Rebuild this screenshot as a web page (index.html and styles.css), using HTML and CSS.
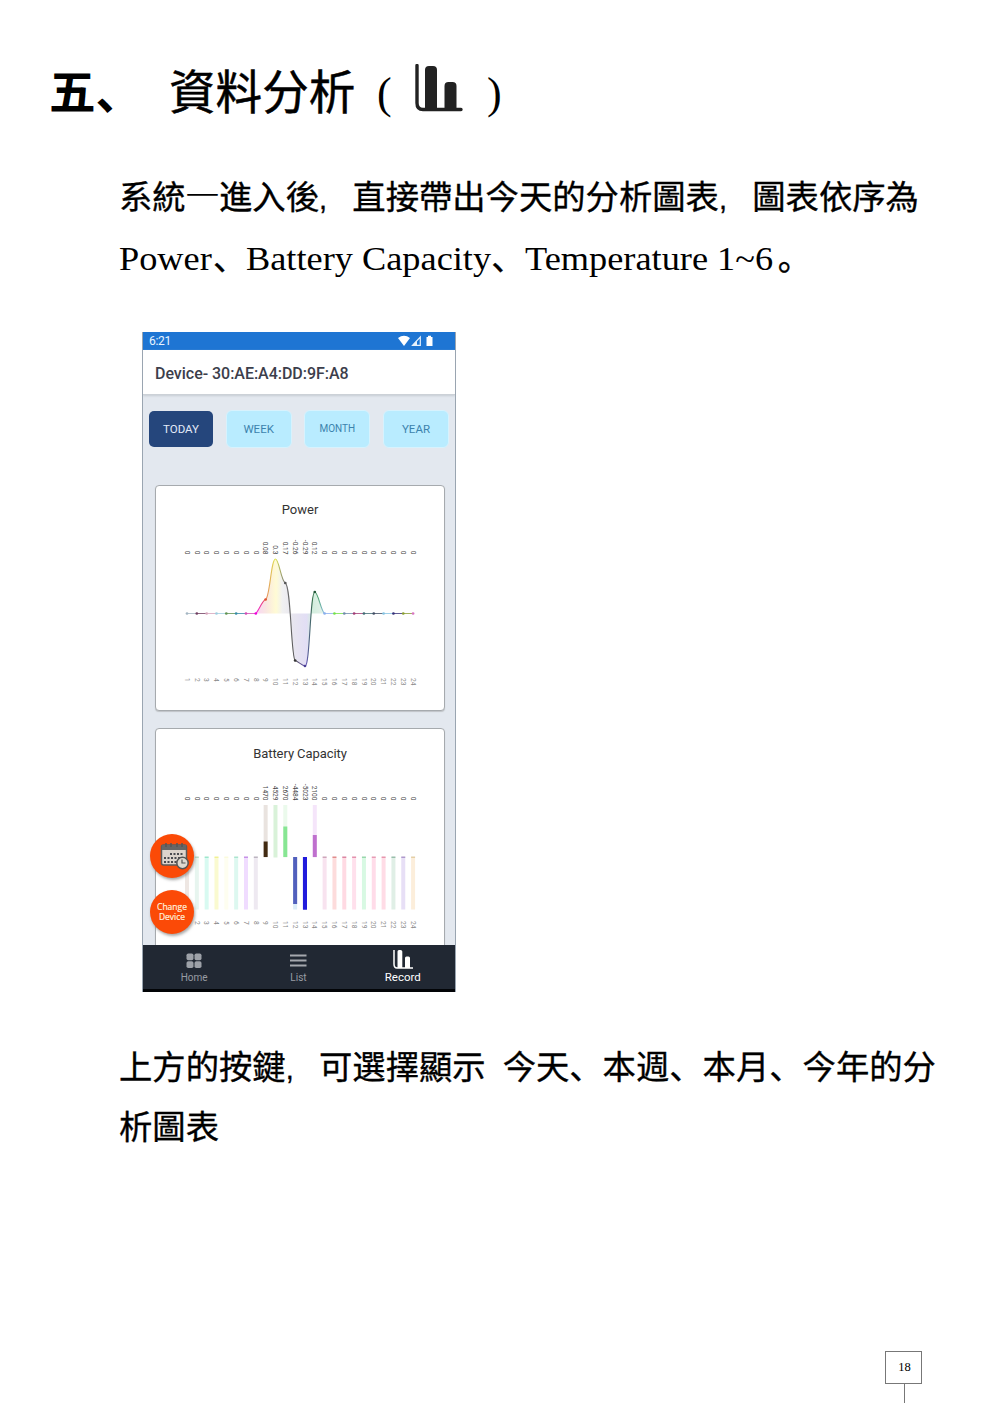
FILE: index.html
```html
<!DOCTYPE html>
<html lang="zh-Hans">
<head>
<meta charset="utf-8">
<title>資料分析</title>
<link rel="stylesheet" href="styles.css">
</head>
<body>
<main class="page">
  <h1 class="heading">
    <span class="heading-number">五、</span>
    <span class="heading-title">資料分析</span>
    <span class="paren">(</span>
    <svg class="heading-icon" viewBox="0 0 48 48"><path d="M2 1.500V39Q2 45.500 8 45.500H46" fill="none" stroke="#222" stroke-width="3.400" stroke-linecap="round"/><path d="M10 45V6Q10 2 14 2H18Q22 2 22 6V45ZM29.500 45V22Q29.500 18 33.500 18H37.500Q41.500 18 41.500 22V45Z" fill="#222"/></svg>
    <span class="paren">)</span>
  </h1>
  <p class="body-text intro">系統<span class="one">一</span>進入後<span class="comma">,</span>直接帶出今天的分析圖表<span class="comma">,</span>圖表依序為<br><span class="latin power">Power</span>、<span class="latin battery">Battery Capacity</span>、<span class="latin temperature">Temperature 1~6</span>。</p>

  <section class="phone">
    <div class="status">
      <span>6:21</span>
      <svg class="status-icons" viewBox="0 0 36 12"><path d="M0 3Q6-1.500 12 3L6 11ZM28.500 2H30V.8H33V2H34.500V11H28.500Z" fill="#fff"/><path d="M14.500 10.300L22.300 2V10.300Z" fill="none" stroke="#e7f1fb" stroke-width="1.200"/><path d="M14 10.800L19 5.500V10.800Z" fill="#e7f1fb"/></svg>
    </div>
    <header class="device">Device- 30:AE:A4:DD:9F:A8</header>
    <div class="content">
      <nav class="periods"><span class="period active">TODAY</span><span class="period">WEEK</span><span class="period small">MONTH</span><span class="period">YEAR</span></nav>
      <article class="card">
        <h2>Power</h2>
        <svg class="chart" id="power-chart" viewBox="156 527 288 184"></svg>
      </article>
      <article class="card">
        <h2>Battery Capacity</h2>
        <svg class="chart" id="battery-chart" viewBox="156 770 288 184"></svg>
      </article>
    </div>
    <nav class="tabs">
      <div class="tab"><svg viewBox="0 0 20 20"><g fill="#9da1a8"><rect x="2.500" y="2.500" width="7" height="6.800" rx="1.800"/><rect x="10.500" y="2.500" width="7" height="6.800" rx="1.800"/><rect x="2.500" y="10.300" width="7" height="6.800" rx="1.800"/><rect x="10.500" y="10.300" width="7" height="6.800" rx="1.800"/></g></svg>Home</div>
      <div class="tab"><svg viewBox="0 0 20 20"><path d="M2 4.500H18.500M2 9.500H18.500M2 14.500H18.500" stroke="#a5a8ae" stroke-width="2"/></svg>List</div>
      <div class="tab selected"><svg viewBox="0 0 20 20"><path d="M1 0V14Q1 18 4 18H20" fill="none" stroke="#fff" stroke-width="1.500"/><path d="M4.500 18V1.500Q4.500 0 6 0H7.500Q9.300 0 9.300 1.500V18ZM12 18V8Q12 6.500 13.500 6.500H15.500Q17 6.500 17 8V18Z" fill="#fff"/></svg>Record</div>
    </nav>
    <div class="floating">
      <div class="round"><svg viewBox="0 0 30 30"><rect x="2.500" y="4" width="25" height="20" rx="2" fill="#ddd4cc" stroke="#5b5b5b" stroke-width="1.500"/><path d="M3 4H27V9H3Z" fill="#666"/><path d="M7 2V6M12 2V6M18 2V6M23 2V6" stroke="#555" stroke-width="1.500"/><path d="M11 13H25M5 17H25M5 21H19" stroke="#4b4b50" stroke-width="2" stroke-dasharray="2 1.500"/><circle cx="23.500" cy="22" r="5.700" fill="#ddd8cf" stroke="#555" stroke-width="1.500"/><path d="M23 18.500V22H26.500" fill="none" stroke="#555" stroke-width="1.200"/></svg></div>
      <div class="round"><span>Change</span><span>Device</span></div>
    </div>
  </section>

  <p class="body-text outro">上方的按鍵<span class="comma">,</span>可選擇顯示<span class="gap"></span>今天、本週、本月、今年的分<br>析圖表</p>
  <footer class="folio"><span class="folio-number">18</span><span class="folio-line"></span></footer>
</main>
<script src="charts.js"></script>
</body>
</html>
```
FILE: styles.css
```css
* { box-sizing: border-box; }
body { margin: 0; background: #fff; color: #000; }
.page { width: 992px; height: 1403px; padding-top: 54px; display: flex; flex-direction: column; overflow: hidden; }
.heading { margin: 0; height: 76px; padding-left: 49px; display: flex; align-items: center; font: 400 46.6px/76px "Noto Sans CJK SC", sans-serif; white-space: nowrap; }
.heading-number { width: 120px; margin-top: -6px; font-weight: 700; }
.heading-title { width: 208px; margin-top: -6px; -webkit-text-stroke: .5px #000; }
.paren { width: 16px; font: 44px/76px "Liberation Serif", serif; padding-top: 3px; }
.heading-icon { width: 48px; height: 48px; margin: -8px 24px 0 22px; }
.body-text { margin: 0; padding-left: 119px; font: 400 33.35px/61px "Noto Sans CJK SC", sans-serif; white-space: nowrap; -webkit-text-stroke: .35px #000; }
.intro { padding-top: 34px; height: 202px; }
.comma { display: inline-block; width: 33.35px; font-family: "Liberation Sans", sans-serif; font-size: 29px; line-height: 1; }
.one { display: inline-block; line-height: 1; transform: scaleY(.6); -webkit-text-stroke: 0; }
.latin { display: inline-block; line-height: 1; font-family: "Liberation Serif", serif; transform: scaleX(1.09); transform-origin: left; -webkit-text-stroke: 0; }
.power { width: 94px; }
.battery { width: 245px; }
.temperature { width: 253px; }
.phone { position: relative; margin-left: 142px; width: 314px; height: 660px; display: flex; flex-direction: column; overflow: hidden; border: 1px solid #9aa5b1; border-top: 0; border-bottom: 0; background: #e3e8ef; font-family: Roboto, sans-serif; }
.status { height: 18px; flex: none; padding: 0 21px 0 6px; display: flex; justify-content: space-between; align-items: center; background: #1e75d3; color: #e9f4ff; font-size: 12px; letter-spacing: -.3px; }
.status-icons { width: 36px; height: 12px; }
.device { height: 45px; flex: none; padding-left: 12px; background: #fff; color: #3c3e4b; font-size: 16px; font-weight: 500; line-height: 47px; letter-spacing: -.03px; border-bottom: 1px solid #ccd1d7; box-shadow: 0 1px 2px #c6ccd3; }
.content { height: 550px; flex: none; padding: 15px 6px 0 6px; overflow: hidden; }
.periods { height: 38px; display: flex; justify-content: space-between; align-items: center; }
.period { width: 66px; height: 38px; border: 1.5px solid #d7f2fd; border-radius: 6px; background: #b9ecff; color: #3c83ad; font-size: 11.5px; line-height: 36px; text-align: center; }
.period.active { width: 64px; height: 36px; border: 0; border-radius: 5px; background: #25467c; color: #e3eaf8; }
.period.small { font-size: 10px; }
.card { width: 290px; height: 226px; margin: 0 0 17px 6px; border: 1px solid #a6aaae; border-radius: 4px; background: #fff; box-shadow: 0 1px 1px #bfc3c7; }
.periods + .card { margin-top: 37px; }
.card h2 { margin: 0; height: 41px; padding-top: 15px; color: #333; font: 400 13px/18px Roboto, sans-serif; text-align: center; }
.card:last-child h2 { padding-top: 16px; letter-spacing: -.08px; }
.chart { display: block; width: 288px; height: 184px; }
.chart text { font: 6.6px Roboto, sans-serif; }
.tabs { height: 47px; flex: none; display: grid; grid-template-columns: repeat(3, 104.3px); margin-left: -1px; background: #212833; border-bottom: 3px solid #020407; }
.tab { display: flex; flex-direction: column; align-items: center; padding-top: 6px; color: #989ca4; font-size: 10px; line-height: 14px; }
.tab svg { width: 20px; height: 20px; }
.tab.selected { color: #fff; font-size: 11.5px; padding-top: 5px; }
.floating { position: absolute; left: 7px; top: 502px; display: grid; gap: 12px; }
.round { width: 44px; height: 44px; display: grid; justify-items: center; align-content: center; border-radius: 50%; background: #fb4a07; box-shadow: 1px 2px 3px #6c6c6c99; color: #fff1df; font: 8.5px/10px "Open Sans", sans-serif; -webkit-text-stroke: .2px #fff1df; }
.round span { height: 10px; overflow: hidden; }
.round svg { width: 30px; height: 30px; margin-left: 3px; }
.outro { padding-top: 43px; height: 359px; line-height: 60px; }
.gap { display: inline-block; width: 17px; }
.folio { margin-left: 885px; width: 37px; display: flex; flex-direction: column; align-items: center; }
.folio-number { width: 37px; height: 33px; border: 1px solid #777; font: 12.5px/31px "Liberation Serif", serif; text-align: center; padding-left: 2px; }
.folio-line { width: 1px; height: 19px; margin-left: 1px; background: #777; }
```
FILE: charts.js
```javascript
const ns = 'http://www.w3.org/2000/svg';
const x = i => 187 + (i - 1) * 9.83;

function add(parent, tag, attrs, text) {
  const el = document.createElementNS(ns, tag);
  for (const key in attrs) el.setAttribute(key, attrs[key]);
  if (text !== undefined) el.textContent = text;
  parent.appendChild(el);
  return el;
}

function labels(chart, values, topEnd, bottomStart) {
  for (let i = 1; i <= 24; i++) {
    const value = String(values[i] || 0);
    add(chart, 'text', { transform: `translate(${x(i) - 2.3} ${topEnd}) rotate(90)`, 'text-anchor': 'end', fill: '#444' }, value);
    add(chart, 'text', { transform: `translate(${x(i) - 2.3} ${bottomStart}) rotate(90)`, fill: '#888' }, i);
  }
}

const power = document.getElementById('power-chart');
labels(power, { 9: '0.08', 10: '0.3', 11: '0.17', 12: '-0.26', 13: '-0.29', 14: '0.12' }, 554.5, 678);
const defs = add(power, 'defs', {});
const gradient = add(defs, 'linearGradient', { id: 'area', gradientUnits: 'userSpaceOnUse', x1: 256, x2: 325, y1: 0, y2: 0 });
[[0, '#f9d5f5'], [.14, '#f9e6e2'], [.29, '#fffbd4'], [.38, '#f1f1f1'], [.55, '#e7e5ef'], [.73, '#e2def5'], [.82, '#d3eede'], [1, '#e6f1eb']].forEach(s => add(gradient, 'stop', { offset: s[0], 'stop-color': s[1] }));
const curve = 'M255.800 613.500C259 610 262 601 265.600 599.500C270 597 271 559 275.500 559C279 559 281 581 285.300 583C291 586 291 657 295.100 660.500C299 662 301 665 305 666C310 667 310 592 314.800 592C318 592 321 611 324.600 613.500';
add(power, 'path', { d: curve + 'Z', fill: 'url(#area)' });
const lineGradient = add(defs, 'linearGradient', { id: 'line', gradientUnits: 'userSpaceOnUse', x1: 256, x2: 325, y1: 0, y2: 0 });
[[0, '#f22be4'], [.1, '#ea3d78'], [.15, '#e58c5d'], [.28, '#dde64f'], [.42, '#777'], [.56, '#555'], [.72, '#6955bc'], [.82, '#38704d'], [.9, '#51a774'], [1, '#91bdf0']].forEach(s => add(lineGradient, 'stop', { offset: s[0], 'stop-color': s[1] }));
add(power, 'path', { d: curve, fill: 'none', stroke: 'url(#line)', 'stroke-width': 1.1 });
const colors = ['#a5b6c3', '#713f61', '#d6a5bc', '#a0cee0', '#609353', '#378ca7', '#d34bb5', '#f000dc', '#dd5531', '#dbe34c', '#555', '#343434', '#4b3f94', '#235939', '#8bb0ee', '#76e249', '#718cac', '#a23d75', '#426d75', '#424e65', '#86c4e3', '#383179', '#8a9e33', '#d875c1'];
for (let i = 1; i <= 24; i++) {
  if (i < 8 || (i > 14 && i < 24)) add(power, 'path', { d: `M${x(i)} 613.500H${x(i + 1)}`, stroke: colors[i - 1], 'stroke-width': 1, opacity: .8 });
  const ys = { 9: 599.500, 10: 559, 11: 583, 12: 660.500, 13: 666, 14: 592 };
  if (i !== 10) add(power, 'circle', { cx: x(i), cy: ys[i] || 613.500, r: 1.35, fill: colors[i - 1] });
}

const battery = document.getElementById('battery-chart');
labels(battery, { 9: '1470', 10: '4529', 11: '2670', 12: '-4484', 13: '-5023', 14: '2100' }, 800.5, 921);
const pale = ['#eee7e3', '#e7f5ef', '#d8faf1', '#fafad0', '#fefef0', '#ddf8f0', '#f0dcff', '#eee9f1', '#e9e3df', '#d9f2d9', '#ebfaec', '#dcecf8', '#251bdc', '#f5e5fa', '#f8e3ef', '#fddcdc', '#ffdae3', '#ffe0ec', '#d8f9e3', '#ffdce9', '#ffdce6', '#e0efe6', '#e7dff6', '#fceedb'];
const caps = ['#b99', '#83c39e', '#65d4aa', '#e8e757', '#f8f7ca', '#7bd2ae', '#9e48d0', '#8b8291', '', '', '', '', '', '', '#a56a88', '#c63e3e', '#b93564', '#c94570', '#59b777', '#cf5d82', '#d25076', '#528f70', '#7855a3', '#ceb071'];
for (let i = 1; i <= 24; i++) {
  const up = [9, 10, 11, 14].includes(i);
  add(battery, 'rect', { x: x(i) - 2, y: up ? 805 : 857, width: 4, height: 52.500, fill: pale[i - 1] });
  if (caps[i - 1]) add(battery, 'rect', { x: x(i) - 2, y: 856.700, width: 4, height: .8, fill: caps[i - 1] });
}
[[9, 841.5, 15.5, '#422b12'], [11, 826.5, 30.5, '#87e693'], [12, 857, 47, '#5260bd'], [13, 857, 52.5, '#211bdc'], [14, 835, 22, '#bf70ce']].forEach(b => add(battery, 'rect', { x: x(b[0]) - 2, y: b[1], width: 4, height: b[2], fill: b[3] }));
```
